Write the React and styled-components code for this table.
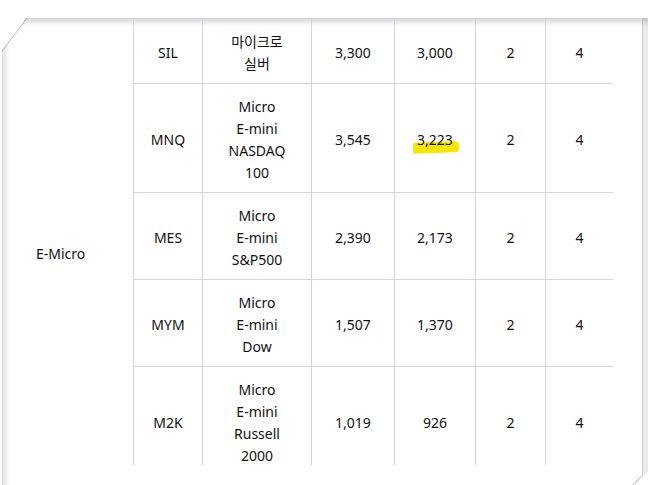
import React from "react";
import styled, { createGlobalStyle } from "styled-components";

const GlobalStyle = createGlobalStyle`
  html, body {
    margin: 0;
    padding: 0;
    background: #fff;
  }
  #root {
    width: 650px;
    height: 485px;
    overflow: hidden;
  }
`;

const LINE = "#d4d1e8";

const rows = [
  { code: "SIL", name: ["마이크로", "실버"], init: "3,300", maint: "3,000", a: "2", b: "4" },
  { code: "MNQ", name: ["Micro", "E-mini", "NASDAQ", "100"], init: "3,545", maint: "3,223", a: "2", b: "4", marked: true },
  { code: "MES", name: ["Micro", "E-mini", "S&P500"], init: "2,390", maint: "2,173", a: "2", b: "4" },
  { code: "MYM", name: ["Micro", "E-mini", "Dow"], init: "1,507", maint: "1,370", a: "2", b: "4" },
  { code: "M2K", name: ["Micro", "E-mini", "Russell", "2000"], init: "1,019", maint: "926", a: "2", b: "4" }
];

// captured "paper" with chamfered corners, like a snipping tool frame
const Paper = styled.div`
  width: 646px;
  height: 481px;
  margin: 1px 0 0 2px;
  background:
    linear-gradient(to bottom right, transparent calc(50% - 1px), #c4c4c4 50%, transparent calc(50% + 1px)) left top / 25px 33px no-repeat,
    linear-gradient(to bottom right, transparent calc(50% - 1px), #c4c4c4 50%, transparent calc(50% + 1px)) right bottom / 29px 29px no-repeat,
    #fff;
  clip-path: polygon(24px 0, 100% 0, 100% calc(100% - 28px), calc(100% - 28px) 100%, 0 100%, 0 32px);
  box-shadow:
    inset 0 8px 6px -4px rgba(0, 0, 0, 0.17),
    inset 7px 0 6px -4px rgba(0, 0, 0, 0.15),
    inset -5px 0 0 #ececec,
    inset -6px 0 0 #cfcfcf,
    inset 0 -5px 0 #ececec,
    inset 0 -6px 0 #cfcfcf;
`;

const Viewport = styled.div`
  margin-top: 18px;
  height: 447px;
  overflow: hidden;
  padding-left: 24px;
`;

const Grid = styled.div`
  display: grid;
  grid-template-columns: 107px 69px 109px 83px 81px 70px 68px;
  font-family: "Noto Sans", "Noto Sans CJK KR", sans-serif;
  font-size: 14px;
  line-height: 22px;
  color: #111;
`;

const GroupCell = styled.div`
  grid-row: 1 / span 5;
  display: flex;
  align-items: center;
  padding: 15px 0 0 10px;
`;

const Cell = styled.div`
  box-sizing: border-box;
  border-top: 1px solid ${LINE};
  border-left: 1px solid ${LINE};
  padding: 12px 4px 8px;
  display: flex;
  flex-direction: column;
  align-items: center;
  justify-content: center;
  text-align: center;
`;

const Marked = styled.span`
  position: relative;
  display: inline-block;

  &::before {
    content: "";
    position: absolute;
    left: -4px;
    right: -6px;
    top: 13px;
    height: 11px;
    background: #f9e600;
    border-radius: 2px 4px 4px 1px;
    transform: rotate(-2deg);
    z-index: -1;
  }
`;

const Stack = styled.div`
  position: relative;
  z-index: 0;
`;

export default function App() {
  return (
    <>
      <GlobalStyle />
      <Paper>
        <Viewport>
          <Stack>
            <Grid>
              <GroupCell>E-Micro</GroupCell>
              {rows.map((r) => (
                <React.Fragment key={r.code}>
                  <Cell>{r.code}</Cell>
                  <Cell>
                    {r.name.map((n) => (
                      <div key={n}>{n}</div>
                    ))}
                  </Cell>
                  <Cell>{r.init}</Cell>
                  <Cell>{r.marked ? <Marked>{r.maint}</Marked> : r.maint}</Cell>
                  <Cell>{r.a}</Cell>
                  <Cell>{r.b}</Cell>
                </React.Fragment>
              ))}
            </Grid>
          </Stack>
        </Viewport>
      </Paper>
    </>
  );
}
